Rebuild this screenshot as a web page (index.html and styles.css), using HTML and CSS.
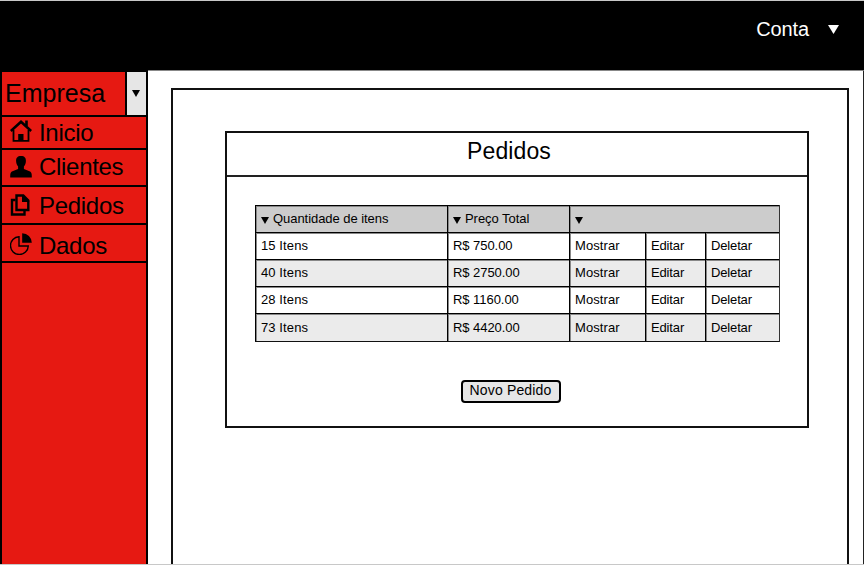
FILE: index.html
```html
<!DOCTYPE html>
<html lang="pt-BR">
<head>
<meta charset="utf-8">
<title>Pedidos</title>
<link rel="stylesheet" href="styles.css">
</head>
<body>
<div class="app">
  <header class="topbar">
    <span class="account">Conta</span>
    <svg class="account-arrow" width="11" height="9" viewBox="0 0 11 9"><path d="M0 0h11L5.500 9z" fill="#fff"/></svg>
  </header>
  <div class="body">
    <nav class="sidebar">
      <div class="company">
        <span class="company-name">Empresa</span>
        <span class="company-toggle"><svg width="8" height="7" viewBox="0 0 8 7"><path d="M0 0h8L4 7z"/></svg></span>
      </div>
      <a class="item home"><svg width="22" height="22" viewBox="0 0 22 22"><path d="M.8 11 11 1.800 21.200 11M16.500 6V.5" fill="none" stroke="#000" stroke-width="2.600"/><path d="M3.500 10v10.800h15V10" fill="none" stroke="#000" stroke-width="1.800"/><path d="M8.200 14h5.300v7H8.200z"/></svg><span>Inicio</span></a>
      <a class="item clients"><svg width="22" height="22" viewBox="0 0 22 22"><path d="M11 0c3.600 0 5 2 4.900 5 0 2.700-1 4.300-2 5.500V13l5.600 2.200c1.500.6 2.300 1.800 2.300 4.800v1.500H.2V20c0-3 .8-4.200 2.300-4.800L8.100 13v-2.500c-1-1.200-2-2.800-2-5.500C6 2 7.400 0 11 0z"/></svg><span>Clientes</span></a>
      <a class="item orders"><svg width="22" height="22" viewBox="0 0 22 22"><path d="M6.500 1.500h6.800l5 5V16H6.500z" fill="none" stroke="#000" stroke-width="2.400"/><path d="M12 1v7h7.500L13 1z"/><path d="M5.500 6H2v14.500h12.500V17" fill="none" stroke="#000" stroke-width="2.400"/></svg><span>Pedidos</span></a>
      <a class="item data"><svg width="22" height="22" viewBox="0 0 22 22"><path d="M9 3.700a8.900 8.900 0 1 0 9.300 9.300H9z" fill="none" stroke="#000" stroke-width="1.400"/><path d="M12.200.2a9.600 9.600 0 0 1 9.600 9.500h-9.600z"/></svg><span>Dados</span></a>
    </nav>
    <main class="content">
      <div class="frame">
        <section class="card">
          <h1 class="title">Pedidos</h1>
          <div class="card-body">
            <div class="table">
              <div class="cell head"><i class="sort"></i>Quantidade de itens</div><div class="cell head"><i class="sort"></i>Preço Total</div><div class="cell head wide"><i class="sort"></i></div>
              <div class="cell">15 Itens</div><div class="cell price">R$ 750.00</div><div class="cell">Mostrar</div><div class="cell action">Editar</div><div class="cell action">Deletar</div>
              <div class="cell alt">40 Itens</div><div class="cell price alt">R$ 2750.00</div><div class="cell alt">Mostrar</div><div class="cell action alt">Editar</div><div class="cell action alt">Deletar</div>
              <div class="cell">28 Itens</div><div class="cell price">R$ 1160.00</div><div class="cell">Mostrar</div><div class="cell action">Editar</div><div class="cell action">Deletar</div>
              <div class="cell alt last">73 Itens</div><div class="cell price alt last">R$ 4420.00</div><div class="cell alt last">Mostrar</div><div class="cell action alt last">Editar</div><div class="cell action alt last">Deletar</div>
            </div>
            <button class="new-order">Novo Pedido</button>
          </div>
        </section>
      </div>
    </main>
  </div>
</div>
</body>
</html>
```
FILE: styles.css
```css
* { box-sizing: border-box; }
body { margin: 0; font-family: "Liberation Sans", Arial, sans-serif; color: #000; background: #fff; }
.app { display: flex; flex-direction: column; width: 864px; height: 565px; overflow: hidden; border-top: 1px solid #c8c8c8; border-bottom: 1px solid #c8c8c8; }
.topbar { flex: none; height: 69px; background: #000; color: #fff; display: flex; align-items: flex-start; justify-content: flex-end; padding: 16px 25px 0 0; }
.account { font-size: 20px; line-height: 24px; letter-spacing: -0.1px; margin-right: 19px; }
.account-arrow { margin-top: 8px; }
.body { flex: 1; display: flex; min-height: 0; }
.sidebar { width: 148px; flex: none; background: #e61912; border: 2px solid #000; border-bottom: 0; }
.company { display: flex; height: 45px; border-bottom: 2px solid #000; }
.company-name { flex: 1; padding-left: 3px; font-size: 25px; line-height: 42px; }
.company-toggle { width: 21px; padding-right: 1px; border-left: 2px solid #000; background: #e6e6e6; display: flex; align-items: center; justify-content: center; }
.item { display: flex; align-items: center; gap: 7px; padding-left: 8px; font-size: 24px; letter-spacing: -0.3px; line-height: 28px; border-bottom: 2px solid #000; }
.item svg { flex: none; }
.home { height: 33px; }
.home svg { margin-bottom: 3px; }
.clients { height: 37px; padding-bottom: 1px; }
.clients svg { margin-bottom: 1px; }
.orders { height: 38px; padding-top: 1px; }
.orders svg { margin-bottom: 2px; }
.data { height: 38px; padding-top: 5px; }
.data svg { margin-bottom: 3px; }
.content { flex: 1; display: flex; padding: 17px 14px 0 23px; border-top: 1px solid #888; border-right: 2px solid #222; }
.frame { flex: 1; border: 2px solid #111; border-bottom: 0; padding: 41px 38px 0 52px; }
.card { height: 297px; border: 2px solid #111; }
.title { margin: 0; height: 44px; border-bottom: 2px solid #222; font-size: 23px; font-weight: 400; line-height: 36px; text-align: center; letter-spacing: 0.1px; padding-right: 16px; }
.card-body { padding: 28px 27px 0 28px; display: flex; flex-direction: column; }
.table { display: grid; width: 525px; grid-template-columns: 192px 122px 76px 60px 74px; grid-template-rows: 27px 27px 27px 27px 28px; border-right: 1px solid #333; border-bottom: 1px solid #111; }
.cell { border-top: 1px solid #000; border-left: 1px solid #000; box-shadow: inset 1px 1px 0 #888; padding-left: 5px; font-size: 13px; line-height: 25px; letter-spacing: 0.1px; white-space: nowrap; }
.head { background: #ccc; display: flex; align-items: center; line-height: 22px; letter-spacing: -0.05px; }
.wide { grid-column: span 3; }
.alt { background: #ebebeb; }
.last { line-height: 27px; }
.price { letter-spacing: -0.05px; }
.action { letter-spacing: -0.15px; }
.sort { border: 4px solid transparent; border-top: 7px solid #000; border-bottom: 0; margin: 3px 4px 0 0; }
.new-order { align-self: center; width: 100px; height: 23px; margin: 38px 14px 0 0; padding: 0 0 2px; border: 2px solid #000; border-radius: 4px; background: #e6e6e6; color: #000; font: 14px/17px "Liberation Sans", Arial, sans-serif; letter-spacing: 0.15px; white-space: nowrap; }
```
